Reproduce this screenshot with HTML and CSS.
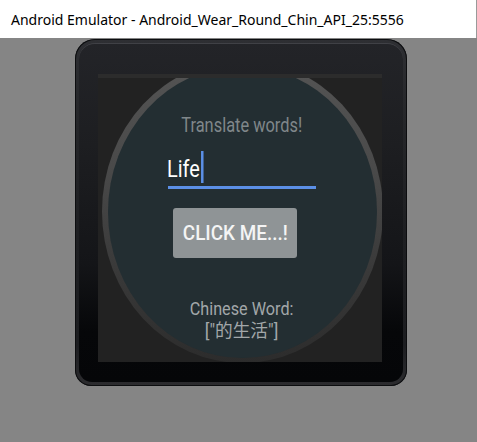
FILE: index.html
```html
<!DOCTYPE html>
<html>
<head>
<meta charset="utf-8">
<link rel="stylesheet" href="styles.css">
</head>
<body>
<div class="titlebar"><span class="title">Android Emulator - Android_Wear_Round_Chin_API_25:5556</span></div>
<div class="stage">
  <div class="watch">
    <div class="bezel">
      <div class="screen">
        <div class="face">
          <div class="dial">
            <div class="heading"><span class="cond s-head">Translate words!</span></div>
            <div class="field">
              <div class="field-text"><span class="typed">Life</span><span class="caret"></span></div>
            </div>
            <div class="button"><span class="cond s-btn">CLICK ME...!</span></div>
            <div class="result">
              <span class="cond s-res">Chinese Word:</span>
              <span class="cond s-cjk">["的生活"]</span>
            </div>
          </div>
        </div>
      </div>
    </div>
  </div>
</div>
</body>
</html>
```
FILE: styles.css
```css
html, body {
  margin: 0;
  padding: 0;
}
body {
  width: 477px;
  height: 442px;
  background: #858585;
  overflow: hidden;
  font-family: Roboto, "Noto Sans CJK SC", sans-serif;
}
.titlebar {
  height: 38px;
  box-sizing: border-box;
  padding: 2px 0 0 11px;
  background: #fff;
  border-right: 1px solid #9a9a9a;
  font-family: "Noto Sans", "Open Sans", sans-serif;
  font-size: 14px;
  line-height: 36px;
  color: #000;
  white-space: nowrap;
}
.stage {
  padding: 1px 0 0 75px;
}
.watch {
  width: 332px;
  height: 347px;
  box-sizing: border-box;
  padding: 4px;
  border-radius: 20px 20px 16px 16px;
  background: linear-gradient(to bottom, #2e2f33 0%, #26272a 20%, #1e1f22 55%, #1c1d20 88%, #2c2c2f 100%);
  box-shadow: inset 0 0 0 1px #0c0d0f;
}
.bezel {
  height: 100%;
  box-sizing: border-box;
  padding: 30px 21px 21px 19px;
  border-radius: 16px 16px 13px 13px;
  border-top: 1px solid #404146;
  background: linear-gradient(to bottom, #232428 0%, #1d1e21 30%, #141518 65%, #060709 85%, #050608 100%);
}
.screen {
  width: 284px;
  height: 288px;
  box-sizing: border-box;
  border-top: 4px solid #2c2c2c;
  background: #222;
  overflow: hidden;
}
.face {
  width: 281px;
  height: 303px;
  box-sizing: border-box;
  margin: -18px 0 0 3.5px;
  padding: 6px 6px 5px;
  border-radius: 50%;
  background: linear-gradient(to bottom, #545454 0%, #4a4a4a 35%, #393939 70%, #2c2c2c 100%);
}
.dial {
  height: 100%;
  box-sizing: border-box;
  padding-top: 48px;
  border-radius: 50%;
  background: #232e32;
  display: flex;
  flex-direction: column;
  align-items: center;
}
.cond {
  display: inline-block;
  white-space: nowrap;
}
.s-head { transform: scaleX(0.82); }
.s-btn { transform: scaleX(0.9); }
.s-res { transform: scaleX(0.9); }
.s-cjk { transform: scaleX(0.98); }
.heading {
  font-size: 20px;
  line-height: 23px;
  color: #80878a;
}
.field {
  width: 148px;
  height: 32px;
  margin-top: 14px;
  padding-bottom: 3px;
  border-bottom: 3px solid #5b8fe6;
  display: flex;
  align-items: flex-end;
}
.field-text {
  display: flex;
  align-items: flex-end;
  margin-left: -1px;
  transform: scaleX(0.83);
  transform-origin: left bottom;
}
.typed {
  font-size: 24px;
  line-height: 28px;
  color: #fff;
}
.caret {
  width: 3px;
  height: 32px;
  margin-left: 1px;
  background: #5b8fe6;
}
.button {
  align-self: flex-start;
  margin: 19px 0 0 65.5px;
  width: 124px;
  height: 50px;
  border-radius: 3px;
  background: #8f9496;
  display: flex;
  align-items: center;
  justify-content: center;
  color: #f4f4f4;
  font-size: 21px;
  line-height: 25px;
  font-weight: 500;
}
.result {
  margin-top: 40px;
  font-size: 18px;
  line-height: 22px;
  color: #a2a7a9;
  display: flex;
  flex-direction: column;
  align-items: center;
}
```
